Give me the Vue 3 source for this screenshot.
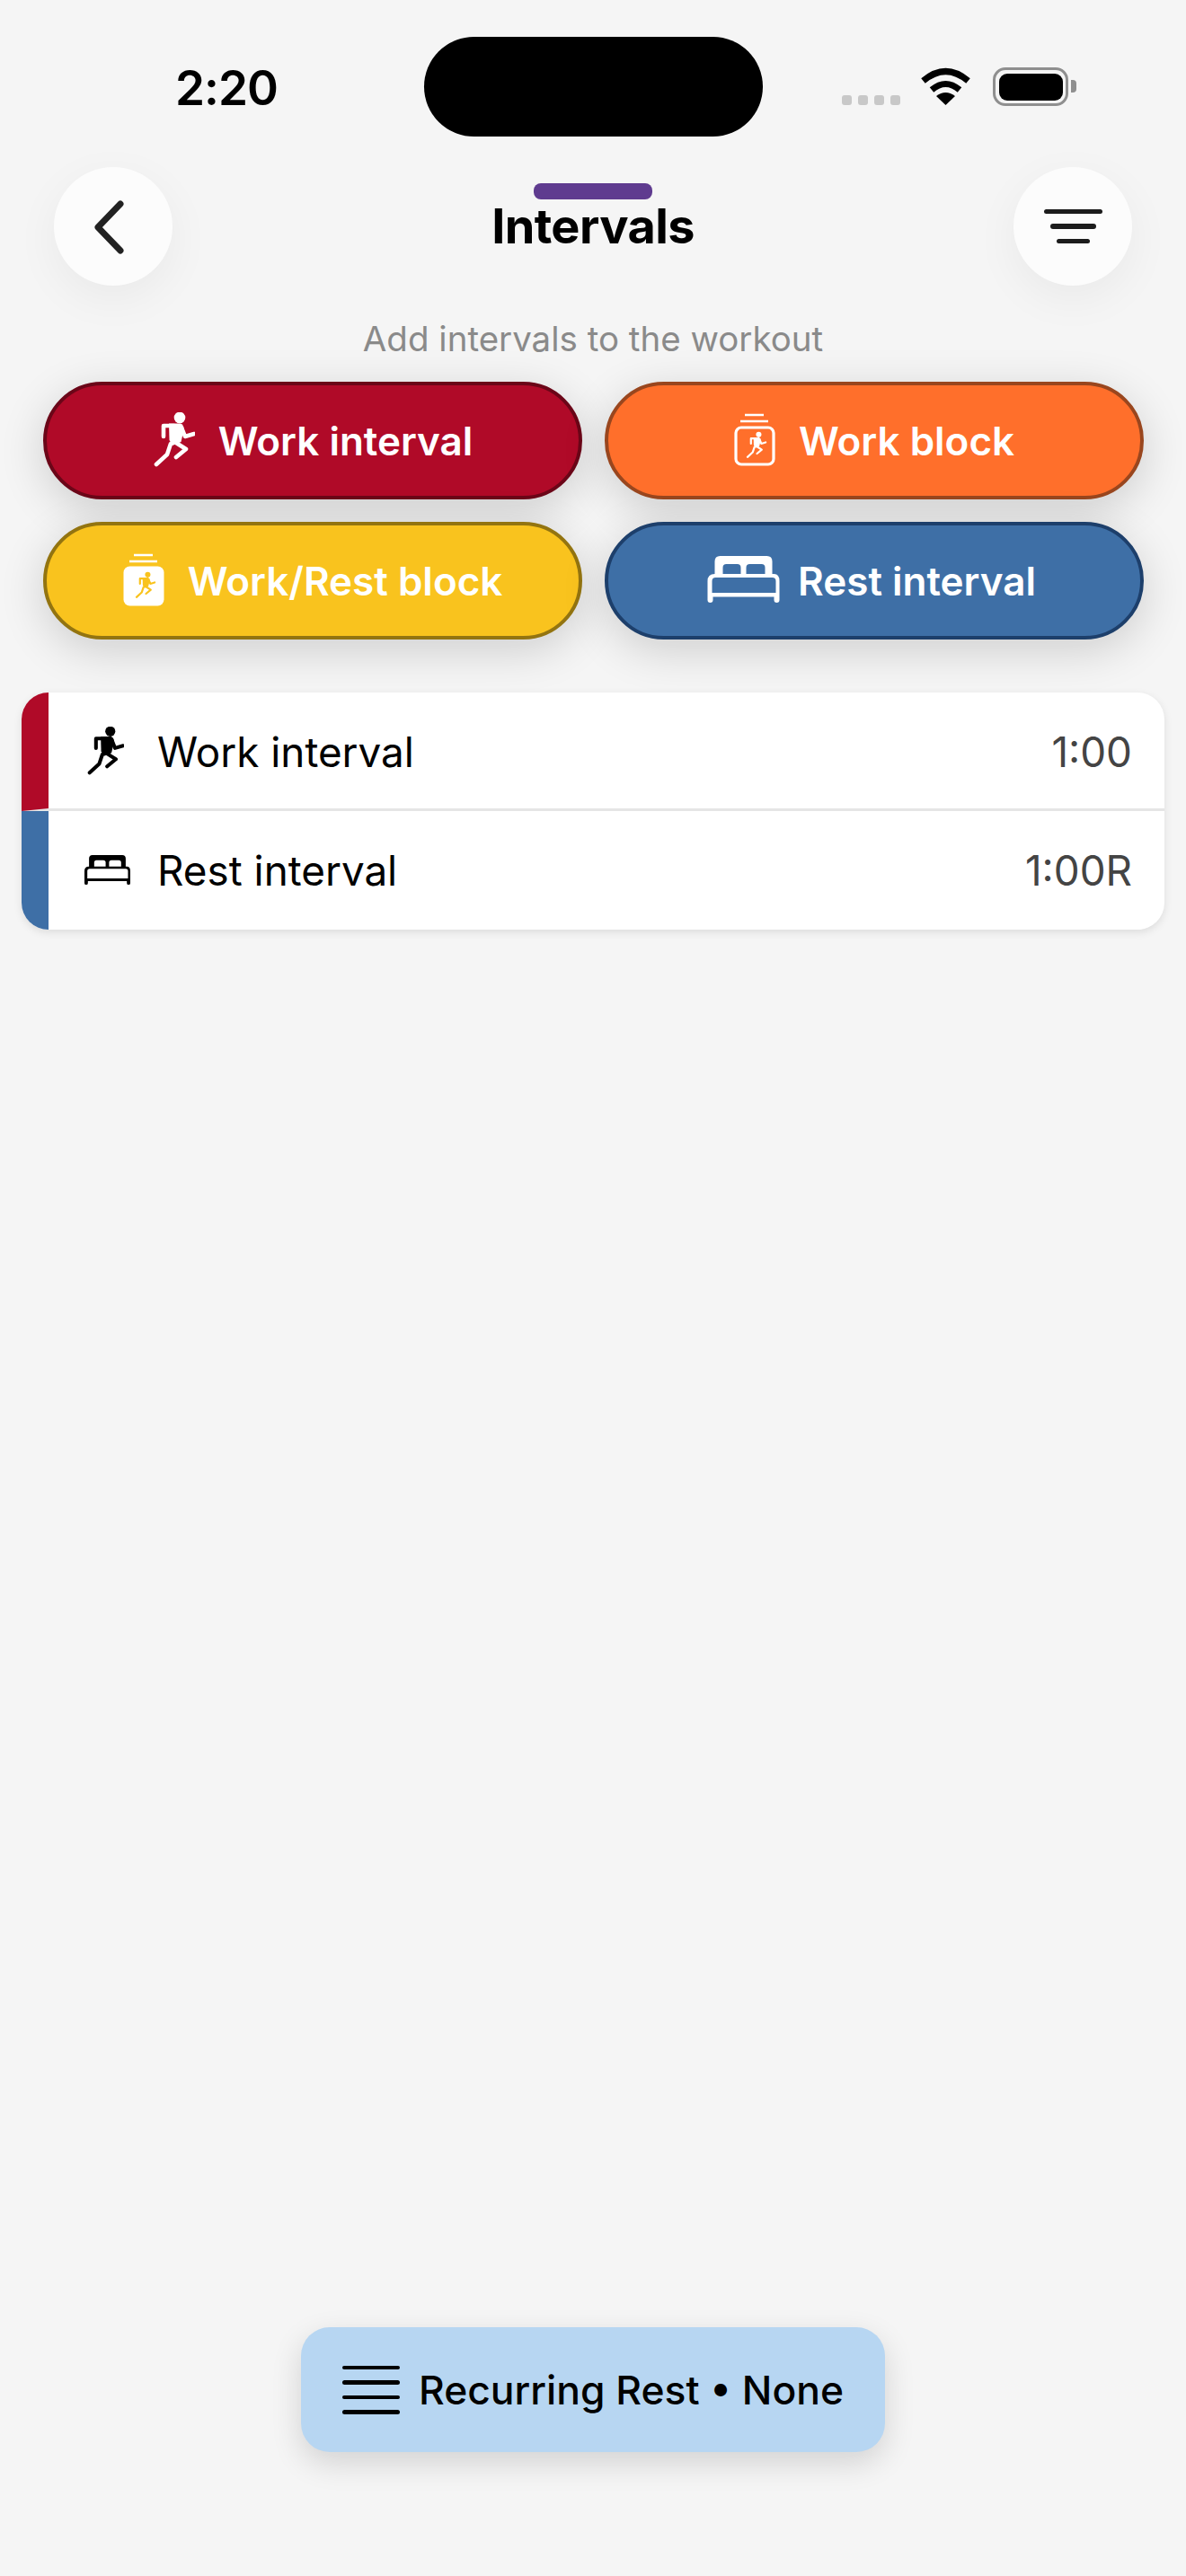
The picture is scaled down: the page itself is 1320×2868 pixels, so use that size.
<script setup>
const limbs = 'M30 48 L30 36 H42 M50 38 L54 48 L64 45 M44 55 L55 62 L44 71 M38 56 L34 68 L22 79'
const torso = 'M36 33.5 H49 Q53 35 52.5 41 L49.5 54 L40 58 L36.5 52 Z'
const bed = 'M28 10 H80 Q86 10 86 16 V30 H88 Q94 30 94 38 V59 Q94 62 91 62 Q88 62 88 59 V55.5 H20 V59 Q20 62 17 62 Q14 62 14 59 V38 Q14 30 22 30 V16 Q22 10 28 10 Z M31 30 V23 Q31 19 35 19 H47 Q51 19 51 23 V30 Z M57 30 V23 Q57 19 61 19 H74 Q78 19 78 23 V30 Z M19 38 Q19 34 23 34 H86 Q90 34 90 38 V51 H19 Z'
</script>

<template>
  <div class="page">
    <div class="status">
      <span class="time">2:20</span>
      <div class="island"></div>
      <div class="status-right">
        <div class="signal"><i></i><i></i><i></i><i></i></div>
        <svg class="wifi" viewBox="0 0 57 42">
          <path d="M3.5 15 Q28.5 -6 53.5 15" fill="none" stroke="#000" stroke-width="7" />
          <path d="M13 25 Q28.5 12 44 25" fill="none" stroke="#000" stroke-width="7" />
          <path d="M28.5 42 L18 32 Q28.5 24 39 32 Z" fill="#000" />
        </svg>
        <div class="battery"><div class="cell"></div><div class="nub"></div></div>
      </div>
    </div>

    <header class="nav">
      <button class="round">
        <svg class="chevron" viewBox="0 0 36 60">
          <path d="M31 4 L6 30 L31 56" fill="none" stroke="#222" stroke-width="7" stroke-linecap="round" stroke-linejoin="round" />
        </svg>
      </button>
      <div class="title-wrap">
        <div class="accent"></div>
        <h1 class="title">Intervals</h1>
      </div>
      <button class="round">
        <span class="filter"><i class="f1"></i><i class="f2"></i><i class="f3"></i></span>
      </button>
    </header>

    <p class="subtitle">Add intervals to the workout</p>

    <section class="pills">
      <button class="pill red">
        <svg class="ic-run" viewBox="18 21 47 61">
          <circle cx="48" cy="27" r="6.3" fill="#fff" />
          <path :d="torso" fill="#fff" />
          <path :d="limbs" fill="none" stroke="#fff" stroke-width="4.6" stroke-linecap="round" stroke-linejoin="round" />
        </svg>
        <span>Work interval</span>
      </button>
      <button class="pill orange">
        <svg class="ic-block" viewBox="25 13 46 60">
          <path d="M37 16 H58 M32 23 H63" stroke="#fff" stroke-width="2.6" />
          <rect x="27" y="30" width="42" height="41" rx="6" fill="none" stroke="#fff" stroke-width="3.2" />
          <g transform="translate(29.4 24.9) scale(.48)">
            <circle cx="48" cy="27" r="6.3" fill="#fff" />
            <path :d="torso" fill="#fff" />
            <path :d="limbs" fill="none" stroke="#fff" stroke-width="4.6" stroke-linecap="round" stroke-linejoin="round" />
          </g>
        </svg>
        <span>Work block</span>
      </button>
      <button class="pill yellow">
        <svg class="ic-block" viewBox="25 13 46 60">
          <path d="M37 16 H58 M32 23 H63" stroke="#fff" stroke-width="2.6" />
          <rect x="25.5" y="28.5" width="45" height="44" rx="7" fill="#fff" />
          <g transform="translate(29.4 24.9) scale(.48)">
            <circle cx="48" cy="27" r="6.3" fill="#f9c31e" />
            <path :d="torso" fill="#f9c31e" />
            <path :d="limbs" fill="none" stroke="#f9c31e" stroke-width="4.6" stroke-linecap="round" stroke-linejoin="round" />
          </g>
        </svg>
        <span>Work/Rest block</span>
      </button>
      <button class="pill blue">
        <svg class="ic-bed" viewBox="14 9 80 54">
          <path :d="bed" fill="#fff" fill-rule="evenodd" />
        </svg>
        <span>Rest interval</span>
      </button>
    </section>

    <section class="list">
      <div class="row work">
        <span class="row-icon">
          <svg class="ic-run-sm" viewBox="18 21 47 61">
            <circle cx="48" cy="27" r="6.3" fill="#000" />
            <path :d="torso" fill="#000" />
            <path :d="limbs" fill="none" stroke="#000" stroke-width="4.6" stroke-linecap="round" stroke-linejoin="round" />
          </svg>
        </span>
        <span class="row-label">Work interval</span>
        <span class="row-time">1:00</span>
      </div>
      <div class="row rest">
        <span class="row-icon">
          <svg class="ic-bed-sm" viewBox="14 9 80 54">
            <path :d="bed" fill="#000" fill-rule="evenodd" />
          </svg>
        </span>
        <span class="row-label">Rest interval</span>
        <span class="row-time">1:00R</span>
      </div>
    </section>

    <button class="recurring">
      <span class="lines"><i></i><i></i><i></i><i></i></span>
      <span>Recurring Rest • None</span>
    </button>
  </div>
</template>

<style>
html, body { margin: 0; background: #f5f5f5; }
</style>

<style scoped>
.page {
  position: relative;
  width: 1320px;
  height: 2868px;
  overflow: hidden;
  background: #f5f5f5;
  display: flex;
  flex-direction: column;
  font-family: Inter, "Liberation Sans", sans-serif;
  color: #000;
}
button { font-family: inherit; border: 0; padding: 0; }
i { display: block; }

.status {
  height: 186px;
  box-sizing: border-box;
  padding: 75px 122px 0 195px;
  display: flex;
  align-items: flex-start;
  justify-content: space-between;
}
.time { font-size: 53px; line-height: 46px; font-weight: 600; letter-spacing: -1px; }
.island {
  position: absolute;
  left: 472px;
  top: 41px;
  width: 377px;
  height: 111px;
  border-radius: 56px;
  background: #000;
}
.status-right { display: flex; align-items: flex-start; }
.signal { display: flex; gap: 7px; margin-top: 31px; margin-right: 22px; }
.signal i { width: 11px; height: 11px; border-radius: 3px; background: #c8c8c8; }
.wifi { width: 57px; height: 42px; margin-right: 24px; }
.battery {
  position: relative;
  width: 84px;
  height: 43px;
  box-sizing: border-box;
  border: 3.5px solid #8f8f8f;
  border-radius: 14px;
  padding: 3.5px;
  margin-right: 9px;
}
.cell { width: 100%; height: 100%; background: #000; border-radius: 9px; }
.nub {
  position: absolute;
  right: -12px;
  top: 11px;
  width: 6px;
  height: 14px;
  background: #8f8f8f;
  border-radius: 0 4px 4px 0;
}

.nav {
  display: flex;
  justify-content: space-between;
  padding: 0 60px;
  height: 132px;
}
.round {
  width: 132px;
  height: 132px;
  border-radius: 50%;
  background: #fcfcfc;
  box-shadow: 0 14px 50px rgba(0, 0, 0, 0.05);
  display: flex;
  align-items: center;
  justify-content: center;
}
.chevron { width: 36px; height: 60px; margin-left: -10px; margin-top: 1px; }
.filter { display: flex; flex-direction: column; align-items: center; gap: 11px; }
.filter i { height: 5.5px; border-radius: 3px; background: #1c1c1c; }
.f1 { width: 65px; }
.f2 { width: 51px; }
.f3 { width: 37px; }
.title-wrap { display: flex; flex-direction: column; align-items: center; padding-top: 18px; }
.accent { width: 132px; height: 18px; border-radius: 8px; background: #5f3b8f; }
.title { margin: 0; font-size: 54px; line-height: 60px; font-weight: 700; letter-spacing: -0.6px; }

.subtitle {
  margin: 36px 0 0;
  text-align: center;
  font-size: 38.5px;
  line-height: 46px;
  color: #8a8a8a;
}

.pills {
  margin-top: 25px;
  padding: 0 48px;
  display: grid;
  grid-template-columns: 600px 600px;
  grid-auto-rows: 131px;
  gap: 25px;
}
.pill {
  box-sizing: border-box;
  border-radius: 66px;
  border: 4px solid;
  color: #fff;
  font-size: 44px;
  font-weight: 600;
  display: flex;
  align-items: center;
  justify-content: center;
  gap: 26px;
  box-shadow: 0 12px 50px rgba(0, 0, 0, 0.16);
}
.red { background: #b00a28; border-color: #6b0618; }
.orange { background: #ff6f2b; border-color: #99461e; }
.yellow { background: #f9c31e; border-color: #937410; }
.blue { background: #3e6fa6; border-color: #1d3f6b; gap: 20px; padding-right: 6px; }
.ic-run { width: 47px; height: 61px; margin-top: -2px; }
.ic-block { width: 46px; height: 60px; margin-top: -4px; }
.ic-bed { width: 81px; height: 54px; margin-top: -4px; }

.list {
  margin: 59px 24px 0;
  border-radius: 30px;
  overflow: hidden;
  background: #fff;
  box-shadow: 0 3px 10px rgba(0, 0, 0, 0.1);
}
.row {
  box-sizing: border-box;
  height: 132px;
  border-left: 30px solid;
  padding-right: 36px;
  display: flex;
  align-items: center;
  font-size: 45.8px;
}
.row.work { border-left-color: #b00a28; border-bottom: 3px solid #e5e5e5; padding-top: 3px; }
.row.rest { border-left-color: #3e6fa6; }
.row-icon { width: 121px; display: flex; justify-content: center; }
.row-icon svg { margin-left: 2px; margin-right: -2px; }
.ic-run-sm { width: 42px; height: 54px; margin-top: -2px; }
.ic-bed-sm { width: 51px; height: 35px; margin-top: -2px; transform: translateX(3px); }
.row-label { flex: 1; }
.row-time { color: #444; }

.recurring {
  margin: auto auto 138px;
  width: 650px;
  height: 139px;
  border-radius: 32px;
  background: #b7d6f2;
  color: #000;
  font-size: 44.4px;
  font-weight: 500;
  display: flex;
  align-items: center;
  justify-content: center;
  gap: 21px;
  box-shadow: 0 12px 34px rgba(0, 0, 0, 0.14);
}
.lines { display: flex; flex-direction: column; gap: 12px; }
.lines i { width: 64px; height: 4.5px; border-radius: 3px; background: #000; }
</style>
